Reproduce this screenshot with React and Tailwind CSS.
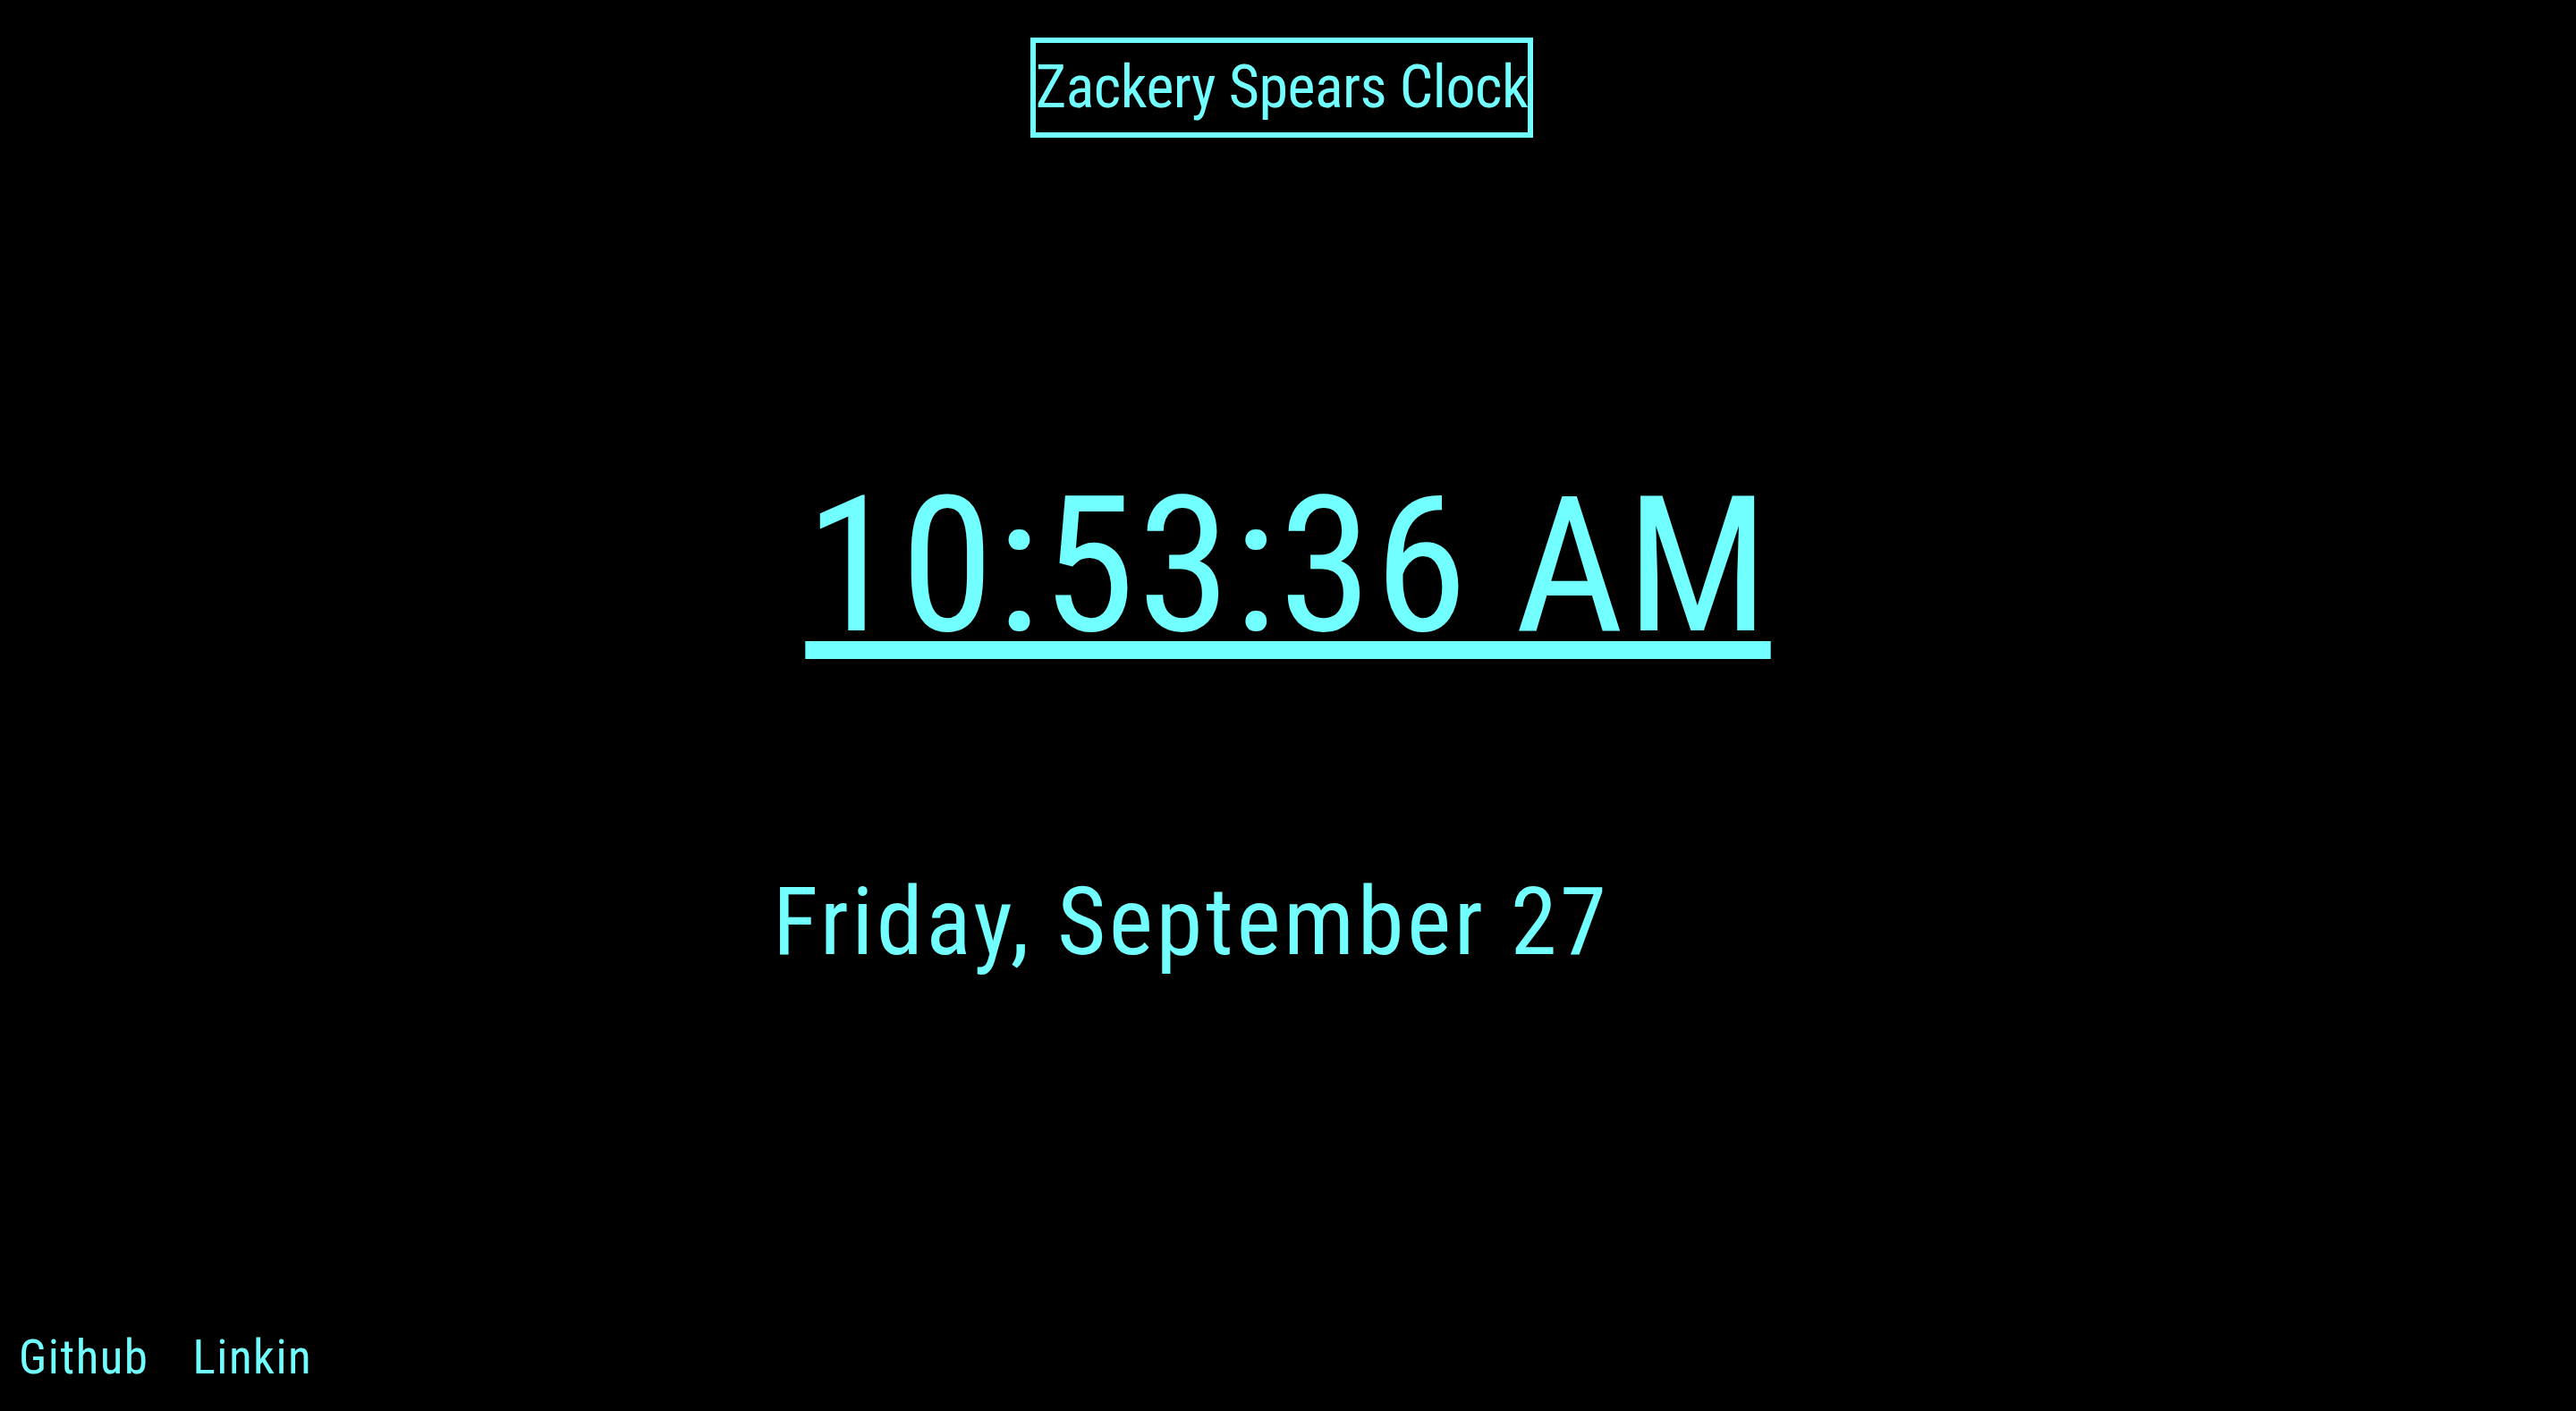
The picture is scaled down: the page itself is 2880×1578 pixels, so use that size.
import React from 'react';

function App() {
    return (
        <div className="h-screen bg-black text-[#72ffff] flex flex-col font-['Roboto',sans-serif] font-stretch-condensed">

            <header className="pt-[42px] pr-[14px] flex justify-center">
                <h1 className="h-[112px] border-[6px] border-[#72ffff] flex items-center text-[66px] leading-none tracking-[-0.5px]">
                    Zackery Spears Clock
                </h1>
            </header>

            <main className="flex flex-col">
                <div className="mt-[374px] flex justify-center">
                    <span className="text-[211px] leading-none tracking-[2.4px] underline decoration-[20px] underline-offset-[12px]">
                        10:53:36 AM
                    </span>
                </div>

                <div className="mt-[240px] pl-[864px]">
                    <p className="text-[105px] leading-none tracking-[3.5px]">Friday, September 27</p>
                </div>
            </main>

            <footer className="mt-auto pb-[33px] pl-[21px] flex gap-[49px] text-[53px] leading-none tracking-[1.5px]">
                <a href="#">Github</a>
                <a href="#">Linkin</a>
            </footer>
        </div>
    );
}

export default App;
